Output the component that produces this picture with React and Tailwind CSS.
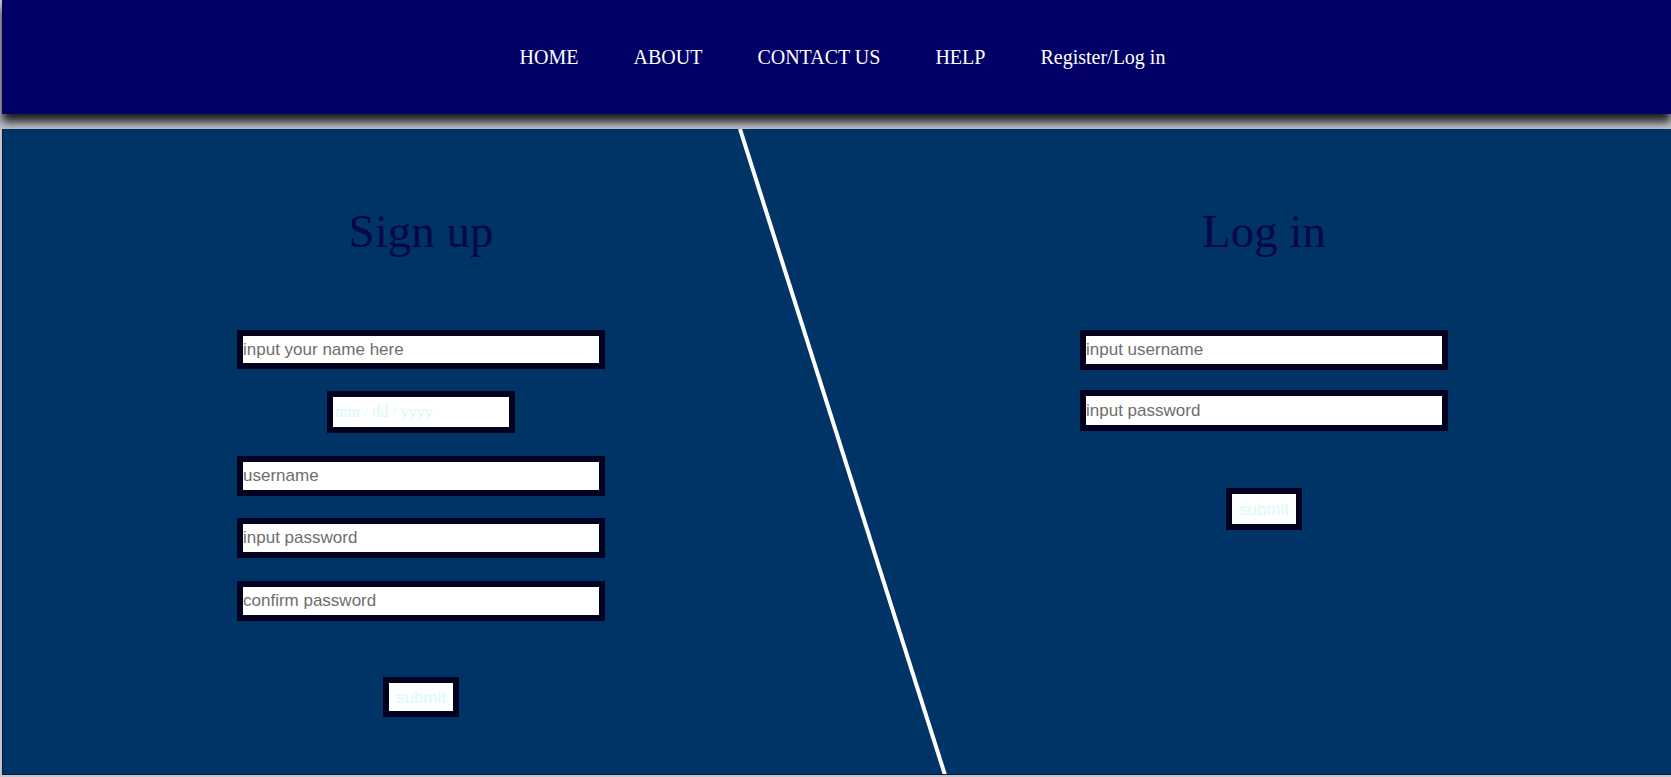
const navItems = ["HOME", "ABOUT", "CONTACT US", "HELP", "Register/Log in"];

function Field({ placeholder, className = "" }) {
  return (
    <input
      type="text"
      placeholder={placeholder}
      className={`w-[368px] border-[6px] border-[#020220] bg-white px-0 font-['Liberation_Sans',Arial,sans-serif] text-[17px] text-[#333] placeholder:text-[#6e6e6e] outline-none ${className}`}
    />
  );
}

function Submit({ className = "" }) {
  return (
    <button
      type="button"
      className={`w-[76px] border-[6px] border-[#020220] bg-white font-['Liberation_Sans',Arial,sans-serif] text-[17px] leading-none text-[#d8fafa] ${className}`}
    >
      submit
    </button>
  );
}

export default function App() {
  return (
    <div className="min-h-screen bg-[#c4c4cc] pl-[2px] font-['Liberation_Serif','Times_New_Roman',serif]">
      <header className="relative z-10 flex h-[114px] items-center justify-center gap-[55px] bg-[#010066] pl-[12px] shadow-[0_8px_9px_rgba(0,0,0,0.85)]">
        {navItems.map((item) => (
          <a key={item} href="#" className="text-[20px] text-white">
            {item}
          </a>
        ))}
      </header>

      <main className="relative mt-[15px] flex h-[646px] border-b border-l border-[#0b1836] bg-[#013466]">
        <svg className="pointer-events-none absolute inset-0 h-full w-full">
          <line x1="737" y1="0" x2="942" y2="646" stroke="#ffffff" strokeWidth="4" />
        </svg>

        <section className="flex w-[836px] flex-col items-center pt-[79px]">
          <h1 className="text-[47px] leading-none text-[#07074a]">Sign up</h1>
          <Field placeholder="input your name here" className="mt-[75px] h-[39px]" />
          <div className="mt-[22px] flex h-[42px] w-[188px] items-center border-[6px] border-[#020220] bg-white pl-[2px] text-[16px] text-[#d6fafa]">
            mm / dd / yyyy
          </div>
          <Field placeholder="username" className="mt-[23px] h-[40px]" />
          <Field placeholder="input password" className="mt-[22px] h-[40px]" />
          <Field placeholder="confirm password" className="mt-[23px] h-[40px]" />
          <Submit className="mt-[56px] h-[40px]" />
        </section>

        <section className="flex flex-1 flex-col items-center pl-[18px] pt-[79px]">
          <h1 className="text-[47px] leading-none text-[#07074a]">Log in</h1>
          <Field placeholder="input username" className="mt-[75px] h-[40px]" />
          <Field placeholder="input password" className="mt-[20px] h-[41px]" />
          <Submit className="mt-[57px] h-[42px] w-[75px]" />
        </section>
      </main>
    </div>
  );
}
